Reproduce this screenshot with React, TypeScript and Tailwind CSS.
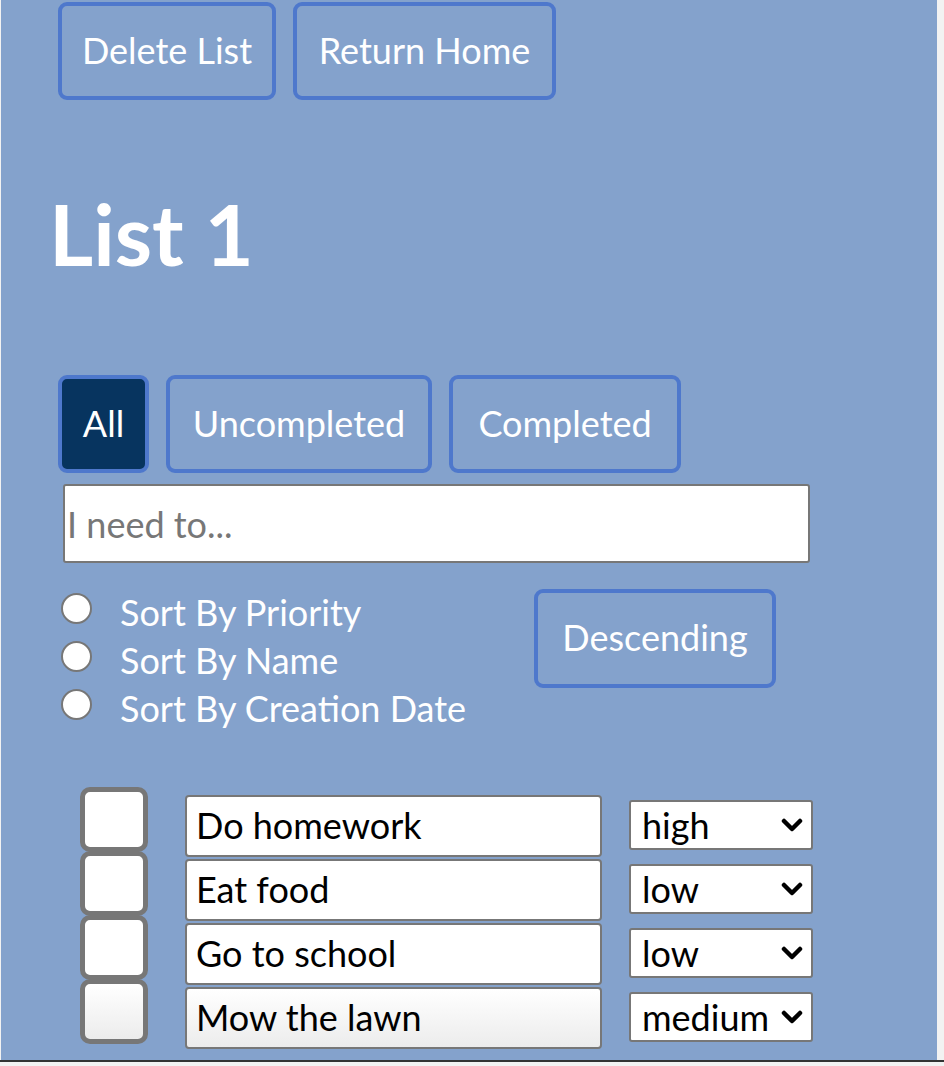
import React from "react";

const btn =
  "flex items-center justify-center border-[4px] border-[#4e78cc] rounded-[9px] text-white text-[36px] leading-none pb-[3px]";

function Chevron() {
  return (
    <svg width="22" height="14" viewBox="0 0 22 14" className="shrink-0">
      <path d="M3 3 L11 11 L19 3" fill="none" stroke="#000" strokeWidth="4.5" strokeLinecap="round" strokeLinejoin="round" />
    </svg>
  );
}

const tasks = [
  { name: "Do homework", pr: "high" },
  { name: "Eat food", pr: "low" },
  { name: "Go to school", pr: "low" },
  { name: "Mow the lawn", pr: "medium" },
];

export default function App() {
  return (
    <div className="w-[944px] h-[1066px] bg-[#f2f2f2] overflow-hidden font-['Lato',sans-serif]">
      <div className="w-[936px] h-[1060px] ml-[1px] bg-[#84a2cc] flex flex-col">
        <div className="flex gap-[17px] ml-[57px] mt-[2px]">
          <div className={`${btn} w-[218px] h-[98px]`}>Delete List</div>
          <div className={`${btn} w-[263px] h-[98px]`}>Return Home</div>
        </div>

        <h1 className="ml-[48px] mt-[91px] text-[85px] leading-none font-bold text-white">List 1</h1>

        <div className="flex gap-[17px] ml-[57px] mt-[99px]">
          <div className={`${btn} w-[91px] h-[98px] bg-[#07345f]`}>All</div>
          <div className={`${btn} w-[266px] h-[98px]`}>Uncompleted</div>
          <div className={`${btn} w-[232px] h-[98px]`}>Completed</div>
        </div>

        <div className="ml-[62px] mt-[11px] w-[747px] h-[79px] bg-white border-[2px] border-[#777] rounded-[3px] flex items-center pl-[2px]">
          <span className="text-[36px] text-[#777] leading-none">I need to...</span>
        </div>

        <div className="flex ml-[60px] mt-[25px]">
          <div className="flex flex-col w-[473px]">
            {["Sort By Priority", "Sort By Name", "Sort By Creation Date"].map((l) => (
              <div key={l} className="flex items-center h-[48px]">
                <div className="w-[31px] h-[31px] rounded-full bg-white border-[2px] border-[#777] mb-[7px] shrink-0" />
                <span className="ml-[28px] text-white text-[36px] leading-[48px]">{l}</span>
              </div>
            ))}
          </div>
          <div className={`${btn} w-[242px] h-[99px] mt-[1px]`}>Descending</div>
        </div>

        <div className="flex flex-col ml-[79px] mt-[55px]">
          {tasks.map((t, i) => (
            <div key={t.name} className="flex items-start h-[64px]">
              <div
                className={`w-[68px] h-[65px] shrink-0 border-[5px] border-[#777] rounded-[10px] ${
                  i === 3 ? "bg-gradient-to-b from-white to-[#ececec]" : "bg-white"
                }`}
              />
              <div
                className={`ml-[37px] mt-[8px] w-[417px] h-[62px] border-[2px] border-[#777] rounded-[4px] flex items-center pl-[9px] pb-[3px] ${
                  i === 3 ? "bg-gradient-to-b from-white to-[#ececec]" : "bg-white"
                }`}
              >
                <span className="text-[36px] text-black leading-none">{t.name}</span>
              </div>
              <div className="ml-[27px] mt-[13px] w-[184px] h-[50px] bg-white border-[2px] border-[#777] rounded-[3px] flex items-center pl-[11px] pr-[8px]">
                <span className="text-[36px] text-black leading-none flex-1">{t.pr}</span>
                <Chevron />
              </div>
            </div>
          ))}
        </div>
      </div>
      <div className="w-[944px] h-[2px] bg-[#333]" />
    </div>
  );
}
